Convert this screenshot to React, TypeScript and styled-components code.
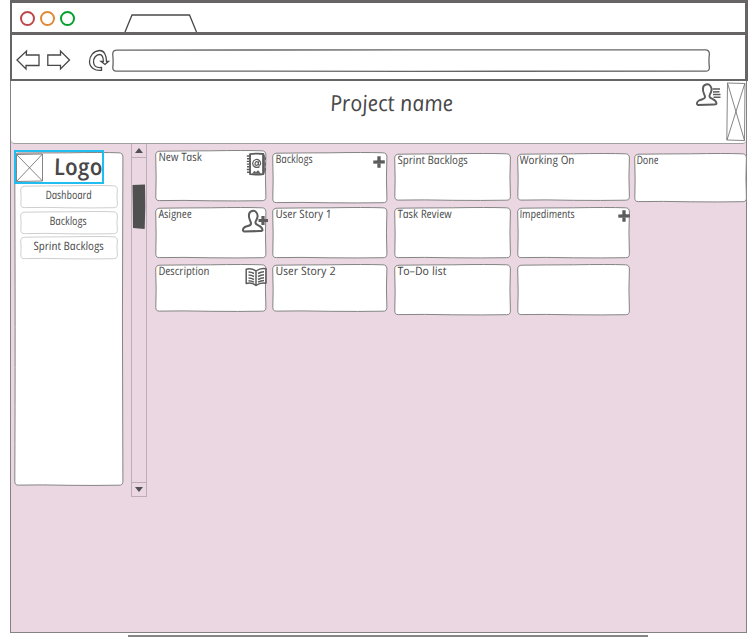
import React, { useLayoutEffect, useRef, useState } from "react";
import styled, { createGlobalStyle } from "styled-components";

const INK = "#484848";
const FRAME = "#666464";
const PINK = "#ead7e2";

const GlobalStyle = createGlobalStyle`
  * { box-sizing: border-box; }
  body { margin: 0; background: #fff; overflow: hidden; }
`;

const Page = styled.div`
  width: 752px;
  height: 642px;
  padding-left: 10px;
  overflow: hidden;
  font-family: "Open Sans", "Noto Sans", sans-serif;
  color: ${INK};
`;

const Chrome = styled.header`
  width: 738px;
  height: 81px;
  border: solid ${FRAME};
  border-width: 3px 3px 2px 2px;
`;

const TabBar = styled.div`
  display: flex;
  align-items: flex-end;
  height: 32px;
  border-bottom: 3px solid ${FRAME};
`;

const Lights = styled.div`
  display: flex;
  gap: 5px;
  width: 98px;
  margin: 0 6px 6px 8px;
`;

const Light = styled.span<{ $color: string }>`
  width: 15px;
  height: 15px;
  border: 2px solid ${(p) => p.$color};
  border-radius: 50%;
`;

const NavBar = styled.div`
  display: flex;
  align-items: center;
  height: 44px;
  padding: 6px 0 0 4px;
`;

const NavIcon = styled.svg<{ $gap: number }>`
  display: block;
  flex: none;
  margin-right: ${(p) => p.$gap}px;
  overflow: visible;
  fill: none;
  stroke: ${INK};
  stroke-width: 1.3;
`;

const Address = styled.div`
  position: relative;
  width: 598px;
  height: 23px;
`;

const Site = styled.div`
  width: 737px;
  height: 552px;
  border: 1px solid #858184;
  border-top: 0;
  background: ${PINK};
`;

const TitleBar = styled.div`
  display: flex;
  align-items: flex-start;
  height: 63px;
  padding-left: 320px;
  background: #fff;
  border-bottom: 1px solid #a29fa2;
  border-radius: 0 0 4px 4px;
`;

const Title = styled.h1`
  width: 366px;
  margin: 5px 0 0;
  font-weight: normal;
`;

const UserSlot = styled.div`
  width: 25px;
  margin: 1px 5px 0 -1px;
`;

const ImageBox = styled.svg`
  display: block;
  flex: none;
  fill: #fff;
  stroke: #777;
  stroke-width: 0.9;
`;

const Body = styled.div`
  display: flex;
  align-items: flex-start;
  padding-left: 3px;
`;

const Sidebar = styled.aside`
  position: relative;
  flex: none;
  width: 110px;
  height: 334px;
  margin-top: 8px;
`;

const SideContent = styled.div`
  position: relative;
  margin-top: -2px;
`;

const LogoBox = styled.div`
  display: flex;
  width: 90px;
  height: 34px;
  padding-top: 1px;
  border: 2px solid #20bdf0;
`;

const LogoText = styled.div`
  margin: -3px 0 0 12px;
`;

const SideList = styled.nav`
  display: flex;
  flex-direction: column;
  gap: 2px;
  padding: 1px 0 0 6px;
`;

const SideButton = styled.div<{ $indent: number }>`
  position: relative;
  width: 98px;
  height: 23.5px;
  padding: 3px 0 0 ${(p) => p.$indent}px;
`;

const SideWord = styled.div`
  position: relative;
`;

const Scrollbar = styled.div`
  display: flex;
  flex-direction: column;
  flex: none;
  width: 16px;
  height: 353px;
  margin: 0 8px 0 7px;
  border: 1px solid #bcadb7;
  border-top: 0;
`;

const ScrollEnd = styled.div<{ $bottom?: boolean }>`
  display: flex;
  align-items: center;
  justify-content: center;
  height: 14px;
  margin-top: ${(p) => (p.$bottom ? "auto" : "0")};
  border: 0 solid #bcadb7;
  border-width: ${(p) => (p.$bottom ? "1px 0 0" : "0 0 1px")};
`;

const Thumb = styled.svg`
  display: block;
  flex: none;
  margin-top: 26px;
  fill: #505050;
`;

const Board = styled.main`
  display: flex;
  align-items: flex-start;
`;

const Column = styled.section<{ $width: number; $gap: number; $top: number }>`
  display: flex;
  flex-direction: column;
  flex: none;
  width: ${(p) => p.$width}px;
  margin: ${(p) => p.$top}px ${(p) => p.$gap}px 0 0;
`;

const CardBox = styled.article<{ $height: number; $after: number }>`
  display: flow-root;
  position: relative;
  height: ${(p) => p.$height}px;
  margin-bottom: ${(p) => p.$after}px;
`;

const CardLabel = styled.div<{ $shift: number }>`
  position: relative;
  margin: ${(p) => p.$shift}px 0 0 3.5px;
`;

const Corner = styled.div<{ $right: number; $top: number }>`
  position: absolute;
  right: ${(p) => p.$right}px;
  top: ${(p) => p.$top}px;
`;

const Icon = styled.svg`
  display: block;
  overflow: visible;
  fill: none;
  stroke: #5c5c5c;
  stroke-linejoin: round;
`;

const Outline = styled.svg`
  position: absolute;
  inset: 0;
  overflow: visible;
`;

const Word = styled.span<{ $size: number; $line: number; $weight: number }>`
  display: block;
  width: max-content;
  font-size: ${(p) => p.$size}px;
  line-height: ${(p) => p.$line}px;
  font-style: italic;
  font-weight: ${(p) => p.$weight};
  white-space: nowrap;
  transform-origin: 0 80%;
`;

const FootLine = styled.div`
  width: 520px;
  height: 2px;
  margin: 2px 0 0 118px;
  background: #858585;
`;

type HandProps = { text: string; width: number; size?: number; line?: number; weight?: number; lean?: number };

/* Upright marker lettering, condensed to the measure it is given. */
function Hand({ text, width, size = 11.5, line = 14, weight = 500, lean = 10 }: HandProps) {
  const ref = useRef<HTMLSpanElement>(null);
  const [scale, setScale] = useState(1);
  useLayoutEffect(() => {
    if (ref.current) setScale(width / ref.current.offsetWidth);
  }, [text, width]);
  return (
    <Word ref={ref} $size={size} $line={line} $weight={weight} style={{ transform: `scaleX(${scale}) skewX(${lean}deg)` }}>
      {text}
    </Word>
  );
}

type RoughProps = { w: number; h: number; color?: string; stroke?: number };

/* Rounded box with gently bowed, hand-drawn edges. */
function Rough({ w, h, color = "#858585", stroke = 1 }: RoughProps) {
  const r = w - 0.6;
  const b = h - 0.6;
  const d = [
    `M5 1.2 Q${w * 0.25} .9 ${w * 0.5} .8 Q${w * 0.8} .2 ${r - 4} .8`,
    `Q${r} .8 ${r} 5 Q${r - 0.9} ${h * 0.5} ${r} ${b - 4}`,
    `Q${r} ${b} ${r - 4} ${b - 0.2} Q${w * 0.75} ${b + 0.2} ${w * 0.5} ${b - 0.1}`,
    `Q${w * 0.25} ${b - 0.8} 4.5 ${b - 0.3}`,
    `Q.8 ${b} .8 ${b - 4} Q1.5 ${h * 0.55} .7 5 Q.8 1.2 5 1.2Z`,
  ].join(" ");
  return (
    <Outline width={w} height={h}>
      <path d={d} fill="#fff" stroke={color} strokeWidth={stroke} />
    </Outline>
  );
}

const person = "M10 2C14 1 16 5 15.5 8C15 11 13 12 13.5 14C14 17 20 16 20.5 21C20.5 22 20 22 18 22L2 22.5C0 22 1 19 3 18C6 16.5 9.500 17 9 14C8 11 6.500 9 7 6C7 4 8 2.500 10 2Z";

const PersonAdd = () => (
  <Icon width="26" height="25" viewBox="0 0 26 25" strokeWidth="2">
    <path d={person} transform="translate(0 1)" />
    <path d="M21 8V17M16.500 12.500H26" strokeWidth="3.200" />
  </Icon>
);

const PersonList = () => (
  <Icon width="25" height="24" viewBox="0 0 25 24" strokeWidth="1.9">
    <path d={person} transform="translate(0 .5)" />
    <path d="M16.500 7H24M17 10L23.500 9.800M17 12.600H24.500M17.500 15.200H24.500" strokeWidth="1.5" />
  </Icon>
);

const Plus = () => (
  <Icon width="12" height="12" viewBox="0 0 12 12" strokeWidth="3.3">
    <path d="M6 .3V11.700M.3 6.200L11.800 5.900" />
  </Icon>
);

const AddressBook = () => (
  <Icon width="20" height="24" viewBox="0 0 20 24" strokeWidth="1.800">
    <path d="M4 2.200Q10 1 17.500 2V22Q11 23.200 4 22.200Z" />
    <path d="M17.500 3V21" strokeWidth="2.500" />
    <path d="M.8 4H5M1 6.700H5M.8 9.400H5M.8 12.100H5M1 14.800H5M.8 17.500H5M1 20.200H5" strokeWidth="1.4" />
    <path d="M13.600 14.600C10 16.500 6.500 14.500 6.700 11.200C7 7.500 11 6.500 13.300 8.500C15.500 10.600 14.600 14 12.800 13C12 12.500 12.500 10 12.600 9.300M12.300 11.300C12 14 9 14 9 11.900C9 9.200 12 9 12.300 11" strokeWidth="1.200" />
    <path d="M6.500 21.500L8.500 19L10 20.500L12 18.500L14.500 21.500Z" fill="#5c5c5c" strokeWidth=".5" />
    <path d="M19.300 5V8M19.300 10.500V13.500M19.300 16V19" strokeWidth="1" />
  </Icon>
);

const Book = () => (
  <Icon width="22" height="20" viewBox="0 0 22 20" strokeWidth="1.500">
    <path d="M11 4Q6 .5 1.200 2.200V16.500Q6.500 15 11 18.500Q15.500 15 21 16.200V1.800Q16 .5 11 4ZM11 4V18.500" />
    <path d="M3.500 5Q6.500 5 9 6.500M3.500 8Q6.500 8 9 9.500M3.500 11Q6.500 11 9 12.500M3.500 13.700Q6.500 13.700 9 15.200M13 6.500Q16 4.800 19 4.800M13 9.500Q16 7.800 19 7.800M13 12.500Q16 10.800 19 10.800M13 15.200Q16 13.500 19 13.500" />
  </Icon>
);

type CardData = {
  label?: string;
  width?: number;
  height: number;
  after: number;
  shift?: number;
  icon?: React.ReactNode;
  right?: number;
  top?: number;
};
type ColumnData = { width: number; gap: number; top: number; cards: CardData[] };

const columns: ColumnData[] = [
  {
    width: 111.5, gap: 5.5, top: 6,
    cards: [
      { label: "New Task", width: 43.5, height: 51.5, after: 5.5, shift: -0.5, icon: <AddressBook />, right: 1, top: 2 },
      { label: "Asignee", width: 33, height: 51.5, after: 5, shift: 0, icon: <PersonAdd />, right: -1, top: 1 },
      { label: "Description", width: 50.5, height: 48, after: 0, shift: 0, icon: <Book />, right: 0, top: 3.5 },
    ],
  },
  {
    width: 115.5, gap: 6.5, top: 8,
    cards: [
      { label: "Backlogs", width: 37.5, height: 51.5, after: 3.5, shift: 0, icon: <Plus />, right: 3, top: 4 },
      { label: "User Story 1", width: 56, height: 51.5, after: 5, shift: 0 },
      { label: "User Story 2", width: 60, height: 48, after: 0, shift: 0 },
    ],
  },
  {
    width: 117, gap: 5.5, top: 9,
    cards: [
      { label: "Sprint Backlogs", width: 70.5, height: 48, after: 6, shift: -0.5 },
      { label: "Task Review", width: 54, height: 51.5, after: 5, shift: -0.5 },
      { label: "To–Do list", width: 48.5, height: 51.5, after: 0, shift: 0 },
    ],
  },
  {
    width: 113, gap: 4, top: 9,
    cards: [
      { label: "Working On", width: 55, height: 48, after: 6, shift: -0.5 },
      { label: "Impediments", width: 55, height: 51.5, after: 5, shift: -0.5, icon: <Plus />, right: 0, top: 2.5 },
      { height: 51.5, after: 0 },
    ],
  },
  { width: 113, gap: 0, top: 9, cards: [{ label: "Done", width: 22.5, height: 49.5, after: 0, shift: -0.5 }] },
];

const sideLinks = [
  { text: "Dashboard", width: 46.5, indent: 26 },
  { text: "Backlogs", width: 37.5, indent: 29.5 },
  { text: "Sprint Backlogs", width: 70.5, indent: 14 },
];

export default function App() {
  return (
    <>
      <GlobalStyle />
      <Page>
        <Chrome>
          <TabBar>
            <Lights>
              <Light $color="#bd474b" />
              <Light $color="#de8a36" />
              <Light $color="#03a02e" />
            </Lights>
            <NavIcon $gap={0} width="74" height="18" viewBox="0 0 74 18">
              <path d="M1 18L8 1H65.500L72.500 18" />
            </NavIcon>
          </TabBar>
          <NavBar>
            <NavIcon $gap={7} width="24" height="20" viewBox="0 0 24 20">
              <path d="M1 10L10.500 1L10.300 5H23V15.500L10 15.300V19Z" />
            </NavIcon>
            <NavIcon $gap={18} width="24" height="20" viewBox="0 0 24 20">
              <path d="M22.500 10L13.500 1L13.500 5H.8V15.300L13.500 15.300V19Z" />
            </NavIcon>
            <NavIcon $gap={2} width="21" height="22" viewBox="0 0 21 22">
              <path d="M12.500 21.300V18.500C8 19 5 17 4.500 13.500C4 9.500 7 5.500 10.500 5.500C13 5.500 14.500 8 14.300 12.500H12L16 15.500L19.500 12.500H17.500C17.500 6 15 1.300 10.500 1.500C4.500 2 .5 7 .5 12.500C.5 18.500 6 22 12.500 21.300Z" />
            </NavIcon>
            <Address>
              <Rough w={598} h={23} color="#666" stroke={1.3} />
            </Address>
          </NavBar>
        </Chrome>
        <Site>
          <TitleBar>
            <Title>
              <Hand text="Project name" width={123} size={22} line={32} lean={9} />
            </Title>
            <UserSlot>
              <PersonList />
            </UserSlot>
            <ImageBox width="20" height="60" viewBox="0 0 20 60">
              <path d="M1 2L19 2.500L18.500 59.500L.8 59L1.500 2L18.500 59.500M18.800 2.500L1 59" />
            </ImageBox>
          </TitleBar>
          <Body>
            <Sidebar>
              <Rough w={109.5} h={334} />
              <SideContent>
                <LogoBox>
                  <ImageBox width="27" height="29" viewBox="0 0 27 29">
                    <path d="M.5 1.500L26.500 1L26.500 28L.5 28.500L.5 1.500L26.500 28M26.500 1L.5 28.500" />
                  </ImageBox>
                  <LogoText>
                    <Hand text="Logo" width={48.5} size={23} line={32} weight={600} />
                  </LogoText>
                </LogoBox>
                <SideList>
                  {sideLinks.map((link) => (
                    <SideButton key={link.text} $indent={link.indent}>
                      <Rough w={98} h={23.5} color="#cfcfcf" />
                      <SideWord>
                        <Hand text={link.text} width={link.width} />
                      </SideWord>
                    </SideButton>
                  ))}
                </SideList>
              </SideContent>
            </Sidebar>
            <Scrollbar>
              <ScrollEnd>
                <svg width="8" height="5"><path d="M0 5L4 0L8 5Z" fill="#505050" /></svg>
              </ScrollEnd>
              <Thumb width="14" height="45" viewBox="0 0 14 45">
                <path d="M.5 1L13 .5L13.300 22L12.700 45L1 44L.8 22Z" />
              </Thumb>
              <ScrollEnd $bottom>
                <svg width="8" height="5"><path d="M0 0H8L4 5Z" fill="#505050" /></svg>
              </ScrollEnd>
            </Scrollbar>
            <Board>
              {columns.map((col, i) => (
                <Column key={i} $width={col.width} $gap={col.gap} $top={col.top}>
                  {col.cards.map((card, j) => (
                    <CardBox key={j} $height={card.height} $after={card.after}>
                      <Rough w={col.width} h={card.height} />
                      {card.label && (
                        <CardLabel $shift={card.shift ?? 0}>
                          <Hand text={card.label} width={card.width ?? 40} />
                        </CardLabel>
                      )}
                      {card.icon && (
                        <Corner $right={card.right ?? 0} $top={card.top ?? 0}>{card.icon}</Corner>
                      )}
                    </CardBox>
                  ))}
                </Column>
              ))}
            </Board>
          </Body>
        </Site>
        <FootLine />
      </Page>
    </>
  );
}
